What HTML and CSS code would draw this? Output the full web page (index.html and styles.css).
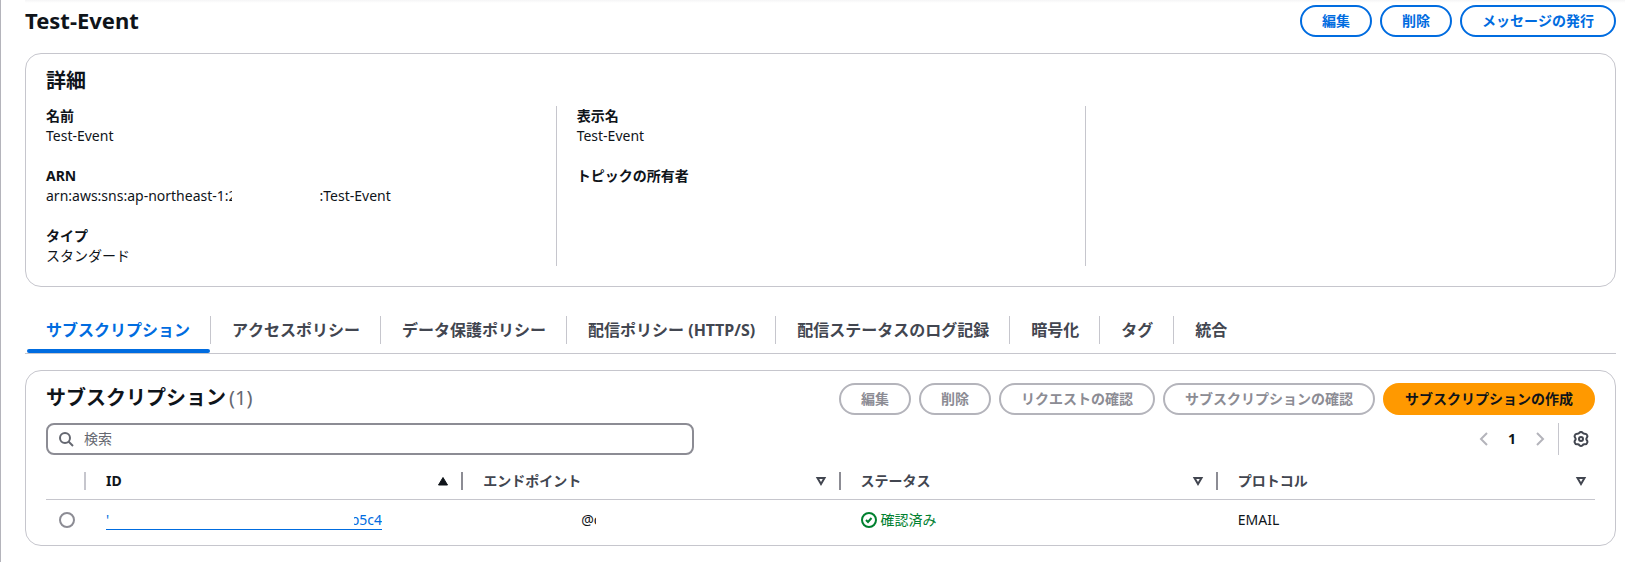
FILE: index.html
```
<!DOCTYPE html>
<html lang="ja">
<head>
    <meta charset="UTF-8">
    <title>Test-Event</title>
    <link rel="stylesheet" href="styles.css">
</head>
<body>
<main class="page">
    <header class="page-header">
        <h1>Test-Event</h1>
        <div class="actions">
            <button type="button" class="btn">編集</button>
            <button type="button" class="btn">削除</button>
            <button type="button" class="btn">メッセージの発行</button>
        </div>
    </header>

    <section class="card details">
        <h2>詳細</h2>
        <div class="columns">
            <dl>
                <div>
                    <dt>名前</dt>
                    <dd>Test-Event</dd>
                </div>
                <div>
                    <dt>ARN</dt>
                    <dd class="arn"><span>arn:aws:sns:ap-northeast-1:</span><span class="account">2</span><span>:Test-Event</span></dd>
                </div>
                <div>
                    <dt>タイプ</dt>
                    <dd>スタンダード</dd>
                </div>
            </dl>
            <dl>
                <div>
                    <dt>表示名</dt>
                    <dd>Test-Event</dd>
                </div>
                <div>
                    <dt>トピックの所有者</dt>
                    <dd></dd>
                </div>
            </dl>
            <dl></dl>
        </div>
    </section>

    <nav class="tabs">
        <a href="#subscriptions" class="active">サブスクリプション</a>
        <a href="#access">アクセスポリシー</a>
        <a href="#data">データ保護ポリシー</a>
        <a href="#delivery">配信ポリシー (HTTP/S)</a>
        <a href="#logging">配信ステータスのログ記録</a>
        <a href="#encryption">暗号化</a>
        <a href="#tags">タグ</a>
        <a href="#integrations">統合</a>
    </nav>

    <section class="card subscriptions" id="subscriptions">
        <div class="card-header">
            <h2>サブスクリプション<span class="count">(1)</span></h2>
            <div class="actions">
                <button type="button" class="btn" disabled>編集</button>
                <button type="button" class="btn" disabled>削除</button>
                <button type="button" class="btn" disabled>リクエストの確認</button>
                <button type="button" class="btn" disabled>サブスクリプションの確認</button>
                <button type="button" class="btn primary">サブスクリプションの作成</button>
            </div>
        </div>

        <div class="tools">
            <label class="search">
                <svg width="16" height="16" viewBox="0 0 16 16" fill="none" stroke="#656871" stroke-width="2"><circle cx="7" cy="7" r="5"/><path d="m15 15-4.5-4.5"/></svg>
                <input type="search" placeholder="検索" aria-label="検索">
            </label>
            <div class="pagination">
                <button type="button" class="icon-btn" aria-label="前のページ" disabled>
                    <svg width="16" height="16" viewBox="0 0 16 16" fill="none" stroke="#b4b4bb" stroke-width="2"><path d="M11 2 5 8l6 6"/></svg>
                </button>
                <button type="button" class="page-number">1</button>
                <button type="button" class="icon-btn" aria-label="次のページ" disabled>
                    <svg width="16" height="16" viewBox="0 0 16 16" fill="none" stroke="#b4b4bb" stroke-width="2"><path d="m5 2 6 6-6 6"/></svg>
                </button>
                <button type="button" class="icon-btn settings" aria-label="設定">
                    <svg width="16" height="16" viewBox="0 0 16 16" fill="none" stroke="#424650" stroke-width="2" stroke-linejoin="round"><path d="M6.4 1.8Q8 .2 9.6 1.8q.6 1 1.8.9 2.3-.3 2.9 1.9.4 1.2-.5 2.1-.9 1.3 0 2.6.9.9.5 2.1-.6 2.2-2.9 1.9-1.2-.1-1.8.9-1.6 1.6-3.2 0-.6-1-1.8-.9-2.3.3-2.9-1.9-.4-1.2.5-2.1.9-1.3 0-2.6-.9-.9-.5-2.1.6-2.2 2.9-1.9 1.2.1 1.8-.9Z"/><circle cx="8" cy="8" r="2"/></svg>
                </button>
            </div>
        </div>

        <table>
            <thead>
                <tr>
                    <th class="select"></th>
                    <th class="sorted"><div>ID <svg width="16" height="16" viewBox="0 0 16 16" fill="#0f141a" stroke="#0f141a"><path d="M8 4.5 12.5 12h-9Z"/></svg></div></th>
                    <th><div>エンドポイント <svg width="16" height="16" viewBox="0 0 16 16" fill="none" stroke="#424650" stroke-width="2"><path d="M4.5 5h7L8 11Z"/></svg></div></th>
                    <th><div>ステータス <svg width="16" height="16" viewBox="0 0 16 16" fill="none" stroke="#424650" stroke-width="2"><path d="M4.5 5h7L8 11Z"/></svg></div></th>
                    <th><div>プロトコル <svg width="16" height="16" viewBox="0 0 16 16" fill="none" stroke="#424650" stroke-width="2"><path d="M4.5 5h7L8 11Z"/></svg></div></th>
                </tr>
            </thead>
            <tbody>
                <tr>
                    <td class="select"><input type="radio" name="subscription" aria-label="サブスクリプションを選択"></td>
                    <td><a href="#subscription" class="sub-id"><span>'</span><span class="id-tail">b5c4</span></a></td>
                    <td><span class="endpoint">@c</span></td>
                    <td>
                        <span class="status">
                            <svg width="16" height="16" viewBox="0 0 16 16" fill="none" stroke="#00802f" stroke-width="2"><circle cx="8" cy="8" r="7"/><path d="m5 8 2 2 3.5-4"/></svg>
                            確認済み
                        </span>
                    </td>
                    <td>EMAIL</td>
                </tr>
            </tbody>
        </table>
    </section>
</main>
</body>
</html>
```
FILE: styles.css
```
* {
    box-sizing: border-box;
}
body {
    margin: 0;
    background: #fff;
    color: #0f141a;
    font-family: "Noto Sans", "Noto Sans CJK JP", sans-serif;
    font-size: 14px;
    line-height: 20px;
}
h1, h2, dl, dd {
    margin: 0;
}
h1 {
    font-size: 22px;
    line-height: 30px;
}
h2 {
    font-size: 20px;
    line-height: 26px;
}
svg {
    display: block;
    flex: none;
}
.page {
    min-height: 100vh;
    padding: 5px 9px 0 24px;
    border-left: 1px solid #b4b4bb;
    background: linear-gradient(#f5f5f6, #fff) no-repeat 24px 0 / 100% 3px;
}
.page-header,
.card-header,
.tools {
    display: flex;
    justify-content: space-between;
}
.actions {
    display: flex;
    gap: 8px;
}
.btn {
    height: 32px;
    padding: 0 20px;
    border: 2px solid #006ce0;
    border-radius: 16px;
    background: #fff;
    color: #006ce0;
    font: inherit;
    font-kerning: none;
    font-weight: bold;
    white-space: nowrap;
    cursor: pointer;
}
.btn:disabled {
    border-color: #b4b4bb;
    color: #8c8c94;
    cursor: default;
}
.btn.primary {
    border-color: #ff9900;
    background: #ff9900;
    color: #0f141a;
}
.card {
    margin-top: 16px;
    border: 1px solid #c6c6cd;
    border-radius: 16px;
}

/* Details */
.details {
    padding: 14px 0 20px;
}
.details h2 {
    padding: 0 20px;
}
.columns {
    display: grid;
    grid-template-columns: repeat(3, 1fr);
    margin-top: 12px;
}
.columns dl {
    display: flex;
    flex-direction: column;
    gap: 20px;
    padding: 0 20px;
}
.columns dl + dl {
    border-left: 1px solid #c6c6cd;
}
dt {
    font-weight: bold;
}
dd {
    min-height: 20px;
}
.arn {
    display: flex;
}
.account {
    width: 3px;
    margin-right: 88px;
    overflow: hidden;
}

/* Tabs */
.tabs {
    display: flex;
    margin-top: 20px;
    padding: 9px 0 0 1px;
    border-bottom: 1px solid #c6c6cd;
    font-kerning: none;
}
.tabs a {
    position: relative;
    margin-bottom: 9px;
    padding: 0 20px;
    color: #424650;
    font-size: 16px;
    font-weight: bold;
    line-height: 28px;
    text-decoration: none;
    white-space: nowrap;
}
.tabs a + a {
    padding-left: 21px;
    border-left: 1px solid #c6c6cd;
}
.tabs .active {
    color: #006ce0;
}
.tabs .active::after {
    content: "";
    position: absolute;
    right: 0;
    bottom: -9px;
    left: 1px;
    height: 4px;
    border-radius: 2px;
    background: #006ce0;
}

/* Subscriptions */
.subscriptions {
    padding: 12px 20px 5px;
}
.count {
    margin-left: 3px;
    color: #656871;
    font-weight: normal;
}
.card-header h2 {
    line-height: 30px;
}
.tools {
    margin: 8px 0;
}
.search {
    display: flex;
    flex: 0 1 648px;
    align-items: center;
    gap: 10px;
    height: 32px;
    padding: 0 10px;
    border: 2px solid #8c8c94;
    border-radius: 8px;
}
.search input {
    flex: 1;
    min-width: 0;
    padding: 0;
    border: 0;
    outline: 0;
    background: none;
    font: inherit;
}
.search input::placeholder {
    color: #656871;
}
.pagination {
    display: flex;
    align-items: center;
}
.icon-btn,
.page-number {
    padding: 0 6px;
    border: 0;
    background: none;
    color: #0f141a;
    font: inherit;
    font-weight: bold;
}
.page-number {
    width: 28px;
}
.settings {
    height: 32px;
    margin-left: 4px;
    padding: 0 6px 0 14px;
    border-left: 1px solid #c6c6cd;
}
table {
    width: 100%;
    border-collapse: separate;
    border-spacing: 0;
    table-layout: fixed;
}
th {
    height: 37px;
    padding: 0;
    border-bottom: 1px solid #c6c6cd;
    color: #424650;
    font-weight: bold;
    text-align: left;
}
th div {
    display: flex;
    align-items: center;
    justify-content: space-between;
    height: 18px;
    padding: 0 10px 0 20px;
    border-right: 2px solid #8c8c94;
}
th:last-child div {
    padding-right: 6px;
    border-right: 0;
}
th.select {
    background: linear-gradient(#c6c6cd, #c6c6cd) no-repeat right center / 2px 18px;
}
.sorted {
    color: #0f141a;
}
td {
    height: 40px;
    padding: 0 20px;
}
.select {
    width: 40px;
}
td.select {
    padding: 0 11px 0 13px;
}
td input {
    display: block;
    width: 16px;
    height: 16px;
    margin: 0;
    border: 2px solid #8c8c94;
    border-radius: 50%;
    appearance: none;
}
td input:checked {
    border: 5px solid #006ce0;
}
.sub-id {
    display: flex;
    justify-content: space-between;
    width: 276px;
    border-bottom: 1px solid #006ce0;
    color: #006ce0;
    line-height: 18px;
    text-decoration: none;
}
.id-tail {
    display: flex;
    justify-content: flex-end;
    width: 28px;
    overflow: hidden;
}
.endpoint {
    display: block;
    width: 15px;
    margin-left: 98px;
    overflow: hidden;
}
.status {
    display: flex;
    align-items: center;
    gap: 4px;
    color: #00802f;
}
```
